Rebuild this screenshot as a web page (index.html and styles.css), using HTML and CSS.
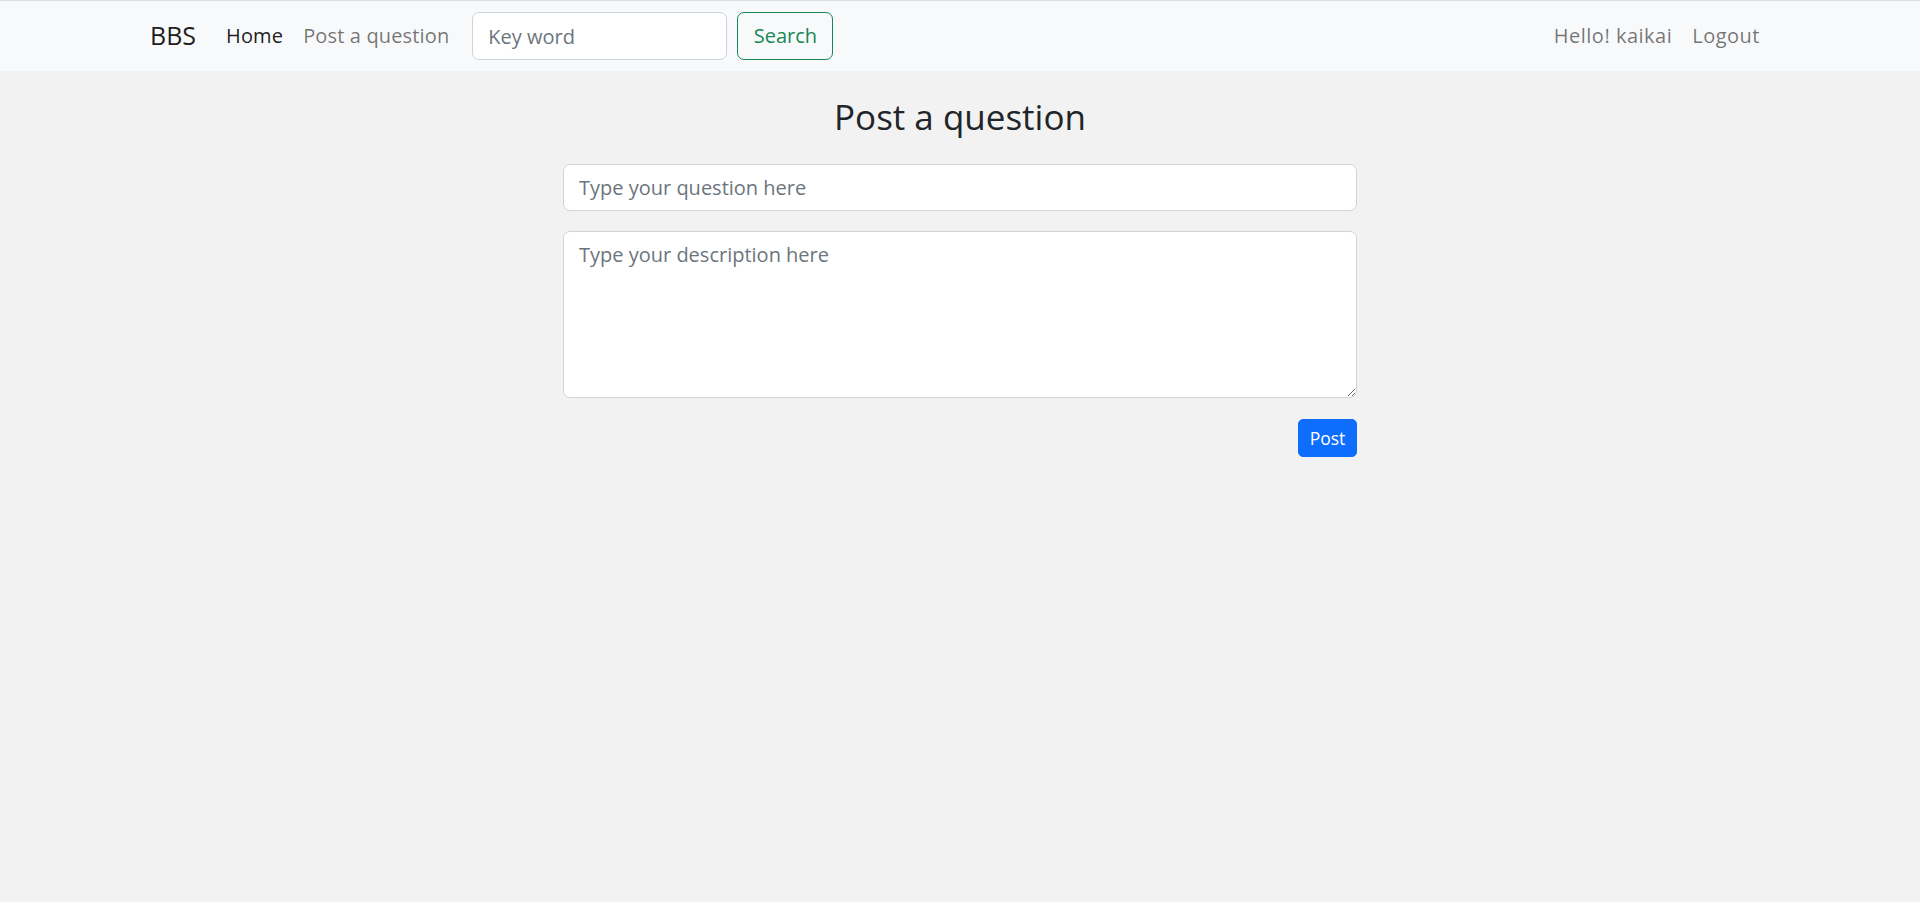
FILE: index.html
```html
<!DOCTYPE html>
<html lang="en">
<head>
<meta charset="utf-8">
<title>BBS - Post a question</title>
<link rel="stylesheet" href="styles.css">
</head>
<body>
<nav class="navbar">
  <div class="container nav-inner">
    <a class="brand" href="#">BBS</a>
    <ul class="nav-list">
      <li><a class="nav-link active" href="#">Home</a></li>
      <li><a class="nav-link" href="#">Post a question</a></li>
    </ul>
    <form class="search-form">
      <input class="field search-input" type="search" placeholder="Key word">
      <button class="btn btn-outline-success" type="button">Search</button>
    </form>
    <ul class="nav-list nav-right">
      <li><a class="nav-link" href="#">Hello! kaikai</a></li>
      <li><a class="nav-link" href="#">Logout</a></li>
    </ul>
  </div>
</nav>
<main class="container">
  <div class="post-col">
    <h3 class="page-title">Post a question</h3>
    <form class="post-form">
      <input class="field question" type="text" placeholder="Type your question here">
      <textarea class="field description" rows="5" placeholder="Type your description here"></textarea>
      <div class="actions">
        <button class="btn btn-primary btn-sm" type="button">Post</button>
      </div>
    </form>
  </div>
</main>
</body>
</html>
```

FILE: styles.css
```css
* { box-sizing: border-box; }

html, body {
  margin: 0;
  padding: 0;
}

body {
  background: #f2f2f2;
  color: #212529;
  font-family: "Open Sans", "Noto Sans", sans-serif;
  font-size: 20px;
  line-height: 1.5;
}

a { text-decoration: none; }

.container {
  width: 1650px;
  margin: 0 auto;
  padding: 0 15px;
}

/* navbar */
.navbar {
  background: #f8f9fa;
  border-top: 1px solid #dcdde0;
  padding: 10px 0;
}

.nav-inner {
  display: flex;
  align-items: center;
}

.brand {
  font-size: 25px;
  line-height: 1.5;
  color: rgba(0, 0, 0, 0.9);
  margin-right: 20px;
  padding: 2px 0;
}

.nav-list {
  display: flex;
  list-style: none;
  margin: 0;
  padding: 0;
}

.nav-link {
  display: block;
  padding: 10px;
  color: rgba(0, 0, 0, 0.55);
  letter-spacing: 0.15px;
}

.nav-link.active {
  color: rgba(0, 0, 0, 0.9);
}

.nav-right {
  margin-left: auto;
}

.nav-right .nav-link {
  letter-spacing: 0.5px;
}

.search-form {
  display: flex;
  margin-left: 13px;
  gap: 10px;
}

.field {
  display: block;
  font-family: inherit;
  font-size: 20px;
  line-height: 1.5;
  color: #212529;
  background: #fff;
  border: 1px solid #ced4da;
  border-radius: 7px;
  padding: 7.5px 15px;
  outline: none;
}

.field::placeholder {
  color: #6c757d;
  opacity: 1;
}

.search-input {
  width: 255px;
  height: 48px;
}

.btn {
  display: inline-block;
  font-family: inherit;
  font-size: 20px;
  line-height: 1.5;
  border: 1px solid transparent;
  border-radius: 7px;
  padding: 7.5px 15px;
  background: transparent;
  cursor: pointer;
}

.btn-outline-success {
  color: #198754;
  border-color: #198754;
  height: 48px;
  width: 96px;
  padding: 0;
}

.btn-primary {
  color: #fff;
  background: #0d6efd;
  border-color: #0d6efd;
}

.btn-sm {
  font-size: 17.5px;
  padding: 5px 10px;
  border-radius: 5px;
  height: 38px;
  width: 59px;
}

/* main */
.post-col {
  width: 794px;
  margin: 0 auto;
}

.page-title {
  font-size: 35px;
  font-weight: 400;
  line-height: 42px;
  text-align: center;
  margin: 25px 0 26px;
}

.post-form {
  display: flex;
  flex-direction: column;
}

.question {
  width: 100%;
  height: 47px;
  margin-bottom: 20px;
}

.description {
  width: 100%;
  height: 167px;
  resize: vertical;
  margin-bottom: 21px;
}

.actions {
  display: flex;
  justify-content: flex-end;
}
```
